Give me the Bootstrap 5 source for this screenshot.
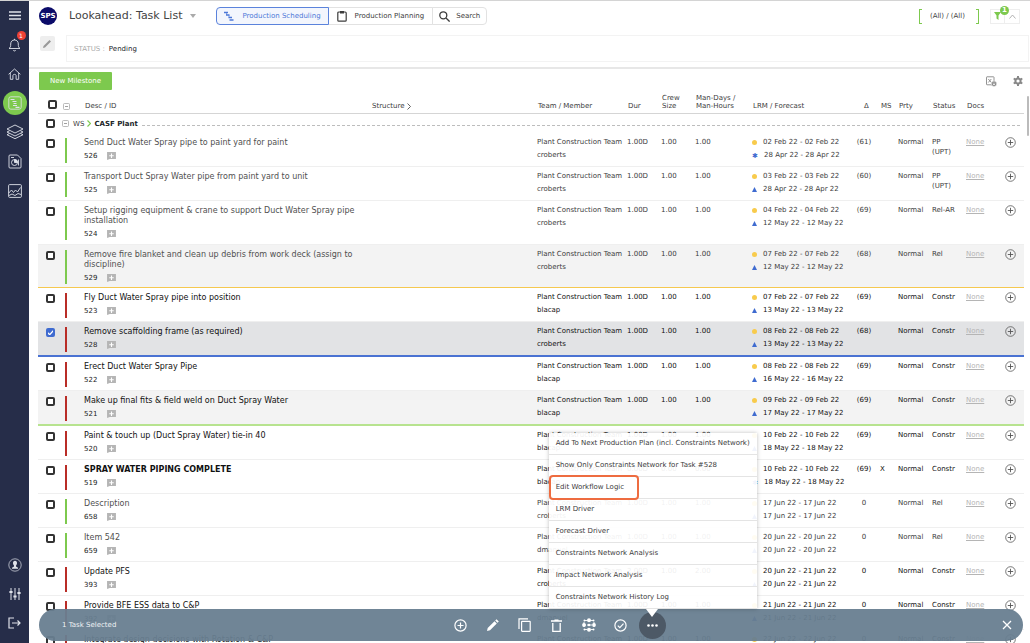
<!DOCTYPE html>
<html lang="en">
<head>
<meta charset="utf-8">
<meta name="viewport" content="width=device-width, initial-scale=1">
<title>Lookahead: Task List</title>
<link href="https://cdn.jsdelivr.net/npm/bootstrap@5.3.0/dist/css/bootstrap.min.css" rel="stylesheet">
<style>
:root{--navy:#262d49;--green:#7dc94e;--red:#b92d27;--blue:#3f6bd0;--ink:#3c3c3c;}
body{font-family:"DejaVu Sans",Verdana,sans-serif;font-size:7px;line-height:10px;color:var(--ink);background:#fff}
svg{display:block;fill:none;stroke:currentColor}
button{line-height:inherit}
.shell{height:100vh;overflow:hidden;border-top:1px solid #d4d4d4}
.side{width:29px;flex:none;background:var(--navy);color:#dfe2ea;padding-bottom:6px}
.side a{color:inherit;width:24px;height:29px}
.side .active-item{background:var(--green);border-radius:50%;height:24px;margin:3px 0}
.count{top:1px;right:1px;width:9px;height:9px;border-radius:50%;background:#ee4136;color:#fff;font-size:6px;line-height:9px}
.logo{width:18px;height:18px;border-radius:50%;background:#0b0b69;color:#fff;font-size:7px;font-weight:bold}
.topbar{height:30px;padding:0 10px 0 10px}
.page-title{font-size:11px;line-height:16px;color:#444}
.caret{border:3px solid transparent;border-top:4px solid #aaa;border-bottom:0}
.tab-btn{height:18px;border:1px solid #e2e2e2;background:#fff;color:#3c3c3c;padding:0 8px;gap:8px}
.tab-btn + .tab-btn{margin-left:-1px}
.tab-btn:last-child{padding:0 6px;gap:6px}
.tab-btn.on{border-color:#5b83dc;background:#f3f6fd;color:#4d78d8;padding:0 7px;position:relative}
.brackets{color:#444;height:16px;padding:0 7px}
.brackets::before,.brackets::after{content:"";width:3px;height:15px;border:1px solid var(--green)}
.brackets::before{border-right:0;margin-right:8px}
.brackets::after{border-left:0;margin-left:11px}
.mini{width:15px;height:15px;border:1px solid #eee;background:#fff;padding:0;color:#aaa}
.mini + .mini{border-left:0}
.count-green{top:-4px;left:9px;width:9px;height:9px;border-radius:50%;background:var(--green);color:#fff;font-size:7px;line-height:9px;font-weight:bold}
.edit-btn{width:15px;height:15px;background:#eee;border:0;border-radius:2px;color:#999;padding:0;margin-top:5px}
.status-box{height:27px;border:1px solid #f3f3f3;padding:0 7px;margin:4px 0 0 11px}
.status-label{color:#aaa}
.status-row{height:38px;padding:0 1px 0 11px;border-bottom:2px solid #e7e7e7}
.actions{height:24px;padding:0 7px 0 10px;color:#888}
.new-btn{background:var(--green);color:#fff;border:0;border-radius:1px;height:18px;width:73px;padding:0}
.grid-area{padding:0 6px 0 9px}
.tasks{table-layout:fixed;width:100%;border-collapse:separate;border-spacing:0}
.tasks th{font-weight:normal;vertical-align:bottom;height:21px;padding:0 0 3px 1px;line-height:8px;border-bottom:1px solid #d5d5d5;white-space:nowrap}
.tasks td{vertical-align:top;padding:0;height:34px;border-bottom:1px solid #efefef}
.tasks .grp td{height:19px;border:0;vertical-align:middle}
.tasks .cell{padding-top:4px;line-height:10px;white-space:nowrap}
.tasks .pair{line-height:13px;padding-top:3px}
.tasks .ttl{font-size:8px;padding:5px 0 0;max-width:278px;white-space:normal}
.ids{height:10px;margin-top:3px;gap:10px;color:#222}
.chk{appearance:none;display:block;width:9px;height:9px;border:2px solid #333;border-radius:2px;margin:6px 0 0 8px;background:#fff}
.tasks th .chk{margin:0 0 1px 9px}
.tasks .grp .chk{margin:0 0 0 8px}
.chk:checked{border-color:var(--blue);background:var(--blue) url("data:image/svg+xml,%3Csvg xmlns='http://www.w3.org/2000/svg' viewBox='0 0 8 8'%3E%3Cpath d='M1.2 4.2l2 2 3.6-4' fill='none' stroke='white' stroke-width='1.3'/%3E%3C/svg%3E") center/8px;background-origin:border-box}
.stripe{width:2px;background:var(--red);margin:5px 0 0 3px;height:25px}
.two .stripe{height:34px}
.tasks .two td{height:44px}
.tasks .yl td{height:43px;border-bottom-color:#f5c84f}
.rel .stripe{background:var(--green)}
.constr td{color:#111}
.rel td .ttl{color:#505050}
.grey td{background:#f3f3f3}
.tasks .sel td{background:#e2e3e5;border-bottom:2px solid #4a72d2;height:35px}
.tasks .gl td{border-bottom:2px solid #b7e38f;height:35px}
.dot{width:5px;height:5px;border-radius:50%;background:#f8cb4c}
.tri{width:5px;height:5px;background:var(--blue);clip-path:polygon(50% 0,100% 100%,0 100%)}
.star{color:var(--blue);font-style:normal;line-height:8px;width:6px}
.lrm{gap:6px;height:13px}
.none-link{color:#b5b5b5;text-decoration:underline}
.plus{border:0;background:none;padding:0;color:#555;margin:4px 0 0 1px}
.dash{border-top:1px dashed #bdbdbd;height:0}
.path-arrow{color:var(--green);margin:0 3px}
.thumb{width:2px;height:40px;background:#bbb;right:1px;top:95px;border-radius:1px}
.float-bar{left:39px;right:7px;bottom:2px;height:32px;border-radius:16px;background:rgba(104,126,144,.95);color:#eef1f4;padding:0 11px 0 23px}
.tools{margin-right:6px}
.tool{width:32px;height:32px;border:0;background:none;color:#fff;padding:0}
.tool.round{width:27px;height:27px;border-radius:50%;background:#4d5966;margin:0 2px}
.pop{bottom:30px;left:-88px;width:208px;background:rgba(255,255,255,.93);box-shadow:0 0 4px rgba(0,0,0,.25);z-index:3}
.pop button{display:block;width:100%;height:22px;border:0;border-bottom:1px solid #e4e4e4;background:none;text-align:left;padding:0 7px;color:#3c3c3c}
.pop li:last-child button{border:0}
.ring{left:0;top:42px;width:90px;height:25px;border:2px solid #ee6c40;border-radius:4px;pointer-events:none}
.tip{border:6px solid transparent;border-top:8px solid #fff;border-bottom:0;left:9px;top:-3px;z-index:4}
</style>
</head>
<body>
<svg width="0" height="0" class="position-absolute">
<symbol id="i-note" viewBox="0 0 10 9"><path d="M0 0h10v8H3L0 9z" fill="#b5b5b5" stroke="none"/><path d="M5 1.800v5M2.500 4.200h5" stroke="#fff" stroke-width="1.200"/></symbol>
<symbol id="i-plus" viewBox="0 0 11 11"><circle cx="5.500" cy="5.500" r="4.800" stroke-width=".8"/><path d="M5.500 2.800v5.400M2.800 5.500h5.400" stroke-width=".9"/></symbol>
<symbol id="i-box" viewBox="0 0 7 7"><rect x=".5" y=".5" width="6" height="6" rx="1" stroke="#aaa" stroke-width=".8"/><path d="M2 3.500h3" stroke="#888" stroke-width=".8"/></symbol>
</svg>
<div class="shell d-flex position-relative">
  <nav class="side d-flex flex-column align-items-center justify-content-between" aria-label="Main">
    <div class="d-flex flex-column align-items-center">
      <a href="#" class="d-flex align-items-center justify-content-center" aria-label="Menu"><svg width="12" height="9" viewBox="0 0 12 9" stroke-width="1.500"><path d="M0 1h12M0 4.500h12M0 8h12"/></svg></a>
      <a href="#" class="d-flex align-items-center justify-content-center position-relative" aria-label="Alerts"><svg width="13" height="14" viewBox="0 0 13 14" stroke-width=".9"><path d="M1 10.500c1.500-1 1.700-2 1.700-4.500 0-2.500 1.500-4 3.800-4s3.800 1.500 3.800 4c0 2.500.2 3.500 1.700 4.500zM5.300 12c.4 1.300 2 1.300 2.400 0M6.500 2V.8"/></svg><span class="count position-absolute text-center">1</span></a>
      <a href="#" class="d-flex align-items-center justify-content-center" aria-label="Home"><svg width="13" height="12" viewBox="0 0 13 12" stroke-width=".9"><path d="M.6 6.300L6.500 1l5.900 5.300M2.300 5v6.300h2.600V7.500c0-1.500 3.200-1.500 3.200 0v3.800h2.600V5"/></svg></a>
      <a href="#" class="active-item d-flex align-items-center justify-content-center" aria-label="Tasks"><svg width="14" height="14" viewBox="0 0 14 14"><rect x=".8" y=".8" width="12.400" height="12.400" rx="2" stroke-width=".8"/><path d="M2.500 3.500h4M4.500 5.500h4M5.500 7.500h3M5 9.500h4M7.500 11.300h4" stroke-width="1.200"/></svg></a>
      <a href="#" class="d-flex align-items-center justify-content-center" aria-label="Layers"><svg width="18" height="17" viewBox="0 0 18 17" stroke-width=".9"><path d="M9 1l8 4-8 4-8-4zM3.500 6.800L1 8l8 4 8-4-2.500-1.200M3.500 9.500L1 10.700l8 4 8-4-2.500-1.200"/></svg></a>
      <a href="#" class="d-flex align-items-center justify-content-center" aria-label="Reports"><svg width="14" height="15" viewBox="0 0 14 15" stroke-width=".9"><path d="M2 1h7.500L13 4.500V13a1 1 0 0 1-1 1H2a1 1 0 0 1-1-1V2a1 1 0 0 1 1-1z"/><circle cx="6.500" cy="8.500" r="3"/><path d="M6.500 8.500V5.500a3 3 0 0 1 3 3z" fill="currentColor"/><path d="M3 3.500h3M10.500 5.500v6"/></svg></a>
      <a href="#" class="d-flex align-items-center justify-content-center" aria-label="Charts"><svg width="14" height="14" viewBox="0 0 14 14" stroke-width=".9"><rect x=".6" y=".6" width="12.800" height="12.800" rx="1"/><path d="M.8 9l2.700-3 2 2.500L7.500 6l2 2 3-4.500M1 11.500l3-1.500 3 1.500 3-2 3 1"/></svg></a>
    </div>
    <div class="d-flex flex-column align-items-center">
      <a href="#" class="d-flex align-items-center justify-content-center" aria-label="Account"><svg width="14" height="14" viewBox="0 0 14 14"><circle cx="7" cy="7" r="6.200" stroke-width=".7"/><path d="M7 2.800c1.400 0 2 1 2 2.200 0 1-.5 2-1 2.400V8.500l2 1.300v1H4v-1l2-1.300V7.400C5.500 7 5 6 5 5c0-1.200.6-2.200 2-2.200z" fill="currentColor" stroke="none"/></svg></a>
      <a href="#" class="d-flex align-items-center justify-content-center" aria-label="Settings"><svg width="12" height="12" viewBox="0 0 12 12"><path d="M2 0v12M6 0v12M10 0v12" stroke-width="1"/><path d="M.4 4h3.200M4.400 8.500h3.200M8.400 5h3.200" stroke-width="2"/></svg></a>
      <a href="#" class="d-flex align-items-center justify-content-center" aria-label="Log out"><svg width="13" height="12" viewBox="0 0 13 12" stroke-width="1.200"><path d="M6 1H1v10h5M4 6h8M9.500 3.500L12 6 9.500 8.500"/></svg></a>
    </div>
  </nav>

  <main class="flex-grow-1 overflow-hidden">
    <header class="topbar d-flex align-items-center justify-content-between">
      <div class="d-flex align-items-center">
        <span class="logo d-flex align-items-center justify-content-center">SPS</span>
        <h1 class="page-title mb-0 ms-2 ps-1 fw-normal">Lookahead: Task List</h1>
        <span class="caret ms-2"></span>
        <div class="d-flex ms-3 ps-1">
          <button class="tab-btn on rounded-1 rounded-end-0 d-flex align-items-center"><svg width="10" height="10" viewBox="0 0 10 10" stroke-width="1.300"><path d="M0 1.500h4M2 4h3.500M4.500 6.500H8M5.500 9h4"/><path d="M2.500 1.500V4M5 4v2.500" stroke-width=".6"/></svg>Production Scheduling</button>
          <button class="tab-btn d-flex align-items-center"><svg width="10" height="12" viewBox="0 0 10 12" stroke-width="1.200"><rect x=".8" y="2" width="8.400" height="9.200" rx="1"/><path d="M3 1h4v2.500H3z" fill="currentColor" stroke="none"/></svg>Production Planning</button>
          <button class="tab-btn rounded-1 rounded-start-0 d-flex align-items-center"><svg width="11" height="11" viewBox="0 0 11 11" stroke-width="1.300"><circle cx="4.300" cy="4.300" r="3.500"/><path d="M7 7l3.600 3.600"/></svg>Search</button>
        </div>
      </div>
      <div class="d-flex align-items-center">
        <span class="brackets d-flex align-items-center">(All) / (All)</span>
        <div class="d-flex ms-1">
          <button class="mini position-relative d-flex align-items-center justify-content-center" aria-label="Filter"><svg width="7" height="8" viewBox="0 0 7 8"><path d="M0 0h7L4.500 3.500V8l-2-1.500v-3z" fill="#7dc94e" stroke="none"/></svg><span class="count-green position-absolute">1</span></button>
          <button class="mini d-flex align-items-center justify-content-center" aria-label="Collapse"><svg width="7" height="5" viewBox="0 0 7 5"><path d="M.5 4.500l3-3.500 3 3.500" stroke-width=".9"/></svg></button>
        </div>
      </div>
    </header>
    <section class="status-row d-flex align-items-start">
      <button class="edit-btn d-flex align-items-center justify-content-center" aria-label="Edit"><svg width="9" height="9" viewBox="0 0 9 9"><path d="M0 9l.5-2L6.500 1 8 2.500 2 8.500z" fill="currentColor" stroke="none"/></svg></button>
      <div class="status-box d-flex align-items-center flex-grow-1"><span class="status-label">STATUS :</span><span class="ms-1 text-dark">Pending</span></div>
    </section>
    <section class="actions d-flex align-items-center justify-content-between">
      <button class="new-btn">New Milestone</button>
      <div class="d-flex align-items-center gap-3">
        <svg width="11" height="11" viewBox="0 0 11 11" stroke-width=".9"><rect x=".5" y=".8" width="7.500" height="8" rx=".5"/><path d="M2.300 3l3 3.500M5.300 3l-3 3.500"/><circle cx="8" cy="7.800" r="2.700" fill="#888" stroke="#fff" stroke-width=".5"/><path d="M8 6.500V9M6.800 7.900L8 9l1.200-1.100" stroke="#fff" stroke-width=".7"/></svg>
        <svg width="10" height="10" viewBox="0 0 10 10"><circle cx="5" cy="5" r="2.600" stroke-width="2"/><path d="M5 0v2M5 8v2M.7 2.500l1.700 1M7.600 6.500l1.700 1M.7 7.500l1.700-1M7.600 3.500l1.700-1" stroke-width="2"/></svg>
      </div>
    </section>
    <div class="grid-area">
      <table class="tasks">
        <colgroup><col style="width:24px"><col style="width:22px"><col><col style="width:166px"><col style="width:90px"><col style="width:34px"><col style="width:34px"><col style="width:57px"><col style="width:104px"><col style="width:24px"><col style="width:18px"><col style="width:34px"><col style="width:34px"><col style="width:38px"><col style="width:20px"></colgroup>
        <thead><tr>
          <th><input type="checkbox" class="chk" aria-label="Select all"></th>
          <th><svg width="7" height="7" class="mb-0"><use href="#i-box"/></svg></th>
          <th>Desc / ID</th><th>Structure <svg class="d-inline" width="4" height="7" viewBox="0 0 4 7" stroke-width=".8"><path d="M.5 .5l3 3-3 3"/></svg></th><th>Team / Member</th><th>Dur</th><th>Crew<br>Size</th><th>Man-Days /<br>Man-Hours</th><th>LRM / Forecast</th><th class="ps-1"><span class="ps-1">Δ</span></th><th>MS</th><th>Prty</th><th>Status</th><th>Docs</th><th></th>
        </tr></thead>
        <tbody id="rows">
          <tr class="grp">
            <td><input type="checkbox" class="chk" aria-label="Select CASF Plant"></td>
            <td colspan="14"><div class="d-flex align-items-center pe-1"><svg width="7" height="7"><use href="#i-box"/></svg><span class="ms-1">WS</span><svg class="path-arrow" width="4" height="7" viewBox="0 0 4 7" stroke-width="1.200"><path d="M.5 .5l3 3-3 3"/></svg><b class="text-dark">CASF Plant</b><span class="dash flex-grow-1 ms-1 mt-1"></span></div></td>
          </tr>
        </tbody>
      </table>
    </div>
    <div class="thumb position-absolute"></div>
  </main>

  <div class="float-bar position-absolute d-flex align-items-center justify-content-between">
    <span>1 Task Selected</span>
    <div class="tools d-flex align-items-center">
      <button class="tool d-flex align-items-center justify-content-center" aria-label="Add"><svg width="13" height="13" viewBox="0 0 13 13" stroke-width="1.200"><circle cx="6.500" cy="6.500" r="5.600"/><path d="M6.500 3.500v6M3.500 6.500h6"/></svg></button>
      <button class="tool d-flex align-items-center justify-content-center" aria-label="Edit"><svg width="12" height="12" viewBox="0 0 12 12"><path d="M0 12l.7-3L7.500 2.200l2.300 2.300L3 11.300zM8.200 1.500L9.500.2l2.300 2.300-1.300 1.300z" fill="currentColor" stroke="none"/></svg></button>
      <button class="tool d-flex align-items-center justify-content-center" aria-label="Copy"><svg width="13" height="14" viewBox="0 0 13 14" stroke-width="1.200"><rect x="3.600" y="3.300" width="8.600" height="10" rx=".5"/><path d="M1 11V.8h9"/></svg></button>
      <button class="tool d-flex align-items-center justify-content-center" aria-label="Delete"><svg width="11" height="13" viewBox="0 0 11 13" stroke-width="1.300"><path d="M0 2h11M3.500 1.200h4M1.800 4v8.300h7.400V4"/></svg></button>
      <button class="tool d-flex align-items-center justify-content-center" aria-label="Network"><svg width="14" height="14" viewBox="0 0 14 14"><path d="M3 2.500h8M3 11.500h8M2 7h10M2 4v6M12 4v6" stroke-width=".9" stroke-dasharray="2 1"/><g fill="currentColor" stroke="none"><circle cx="7" cy="2.300" r="2"/><circle cx="7" cy="11.700" r="2"/><circle cx="2" cy="7" r="1.900"/><circle cx="12" cy="7" r="1.900"/><circle cx="7" cy="7" r="1.300"/><circle cx="2.500" cy="2.500" r="1"/><circle cx="11.500" cy="2.500" r="1"/><circle cx="2.500" cy="11.500" r="1"/><circle cx="11.500" cy="11.500" r="1"/></g></svg></button>
      <button class="tool d-flex align-items-center justify-content-center" aria-label="Complete"><svg width="13" height="13" viewBox="0 0 13 13" stroke-width="1.200"><circle cx="6.500" cy="6.500" r="5.600"/><path d="M3.800 6.700l2 2 3.700-4"/></svg></button>
      <div class="position-relative">
        <button class="tool round d-flex align-items-center justify-content-center" aria-label="More"><svg width="11" height="3" viewBox="0 0 11 3"><g fill="#fff" stroke="none"><circle cx="1.500" cy="1.500" r="1.300"/><circle cx="5.500" cy="1.500" r="1.300"/><circle cx="9.500" cy="1.500" r="1.300"/></g></svg></button>
        <ul class="pop position-absolute list-unstyled mb-0">
          <li><button>Add To Next Production Plan (incl. Constraints Network)</button></li>
          <li><button>Show Only Constraints Network for Task #528</button></li>
          <li><button>Edit Workflow Logic</button></li>
          <li><button>LRM Driver</button></li>
          <li><button>Forecast Driver</button></li>
          <li><button>Constraints Network Analysis</button></li>
          <li><button>Impact Network Analysis</button></li>
          <li><button>Constraints Network History Log</button></li>
          <li class="ring position-absolute" aria-hidden="true"></li>
        </ul>
        <span class="tip position-absolute"></span>
      </div>
    </div>
    <button class="tool w-auto" aria-label="Close"><svg width="10" height="10" viewBox="0 0 10 10" stroke-width="1.300"><path d="M1 1l8 8M9 1L1 9"/></svg></button>
  </div>
</div>
<script src="https://cdn.jsdelivr.net/npm/bootstrap@5.3.0/dist/js/bootstrap.bundle.min.js"></script>
<script>
// id, title, member, duration, crew, man-days, lrm, forecast, delta, milestone, status, row classes
const tasks = [
  [526,'Send Duct Water Spray pipe to paint yard for paint','croberts','1.00D','1.00','1.00','02 Feb 22','28 Apr 22','(61)','','PP<br>(UPT)','rel star-row'],
  [525,'Transport Duct Spray Water pipe from paint yard to unit','croberts','1.00D','1.00','1.00','03 Feb 22','28 Apr 22','(60)','','PP<br>(UPT)','rel'],
  [524,'Setup rigging equipment &amp; crane to support Duct Water Spray pipe installation','croberts','1.00D','1.00','1.00','04 Feb 22','12 May 22','(69)','','Rel-AR','rel two'],
  [529,'Remove fire blanket and clean up debris from work deck (assign to discipline)','croberts','1.00D','1.00','1.00','07 Feb 22','12 May 22','(68)','','Rel','rel two grey yl'],
  [523,'Fly Duct Water Spray pipe into position','blacap','1.00D','1.00','1.00','07 Feb 22','13 May 22','(69)','','Constr','constr'],
  [528,'Remove scaffolding frame (as required)','croberts','1.00D','1.00','1.00','08 Feb 22','13 May 22','(68)','','Constr','constr sel'],
  [522,'Erect Duct Water Spray Pipe','blacap','1.00D','1.00','1.00','08 Feb 22','16 May 22','(69)','','Constr','constr'],
  [521,'Make up final fits &amp; field weld on Duct Spray Water','blacap','1.00D','1.00','1.00','09 Feb 22','17 May 22','(69)','','Constr','constr grey gl'],
  [520,'Paint &amp; touch up (Duct Spray Water) tie-in 40','blacap','1.00D','1.00','1.00','10 Feb 22','18 May 22','(69)','','Constr','constr'],
  [519,'<b>SPRAY WATER PIPING COMPLETE</b>','blacap','0.00D','0.00','0.00','10 Feb 22','18 May 22','(69)','X','Constr','constr star-row'],
  [658,'Description','croberts','1.00D','1.00','1.00','17 Jun 22','17 Jun 22','0','','Rel','rel'],
  [659,'Item 542','dmanuel','1.00D','1.00','1.00','20 Jun 22','20 Jun 22','0','','Rel','rel'],
  [393,'Update PFS','croberts','2.00D','1.00','2.00','20 Jun 22 - 21 Jun 22','20 Jun 22 - 21 Jun 22','0','','Constr','constr'],
  [392,'Provide BFE ESS data to C&amp;P','dmanuel','1.00D','1.00','1.00','21 Jun 22','21 Jun 22','0','','Constr','constr'],
  [391,'Integrate design decisions with Rotation &amp; C&amp;P','dmanuel','1.00D','1.00','1.00','22 Jun 22','22 Jun 22','0','','Constr','constr']
];
const range = d => d.includes(' - ') ? d : d + ' - ' + d;
document.getElementById('rows').insertAdjacentHTML('beforeend', tasks.map(t => `
<tr class="${t[11]}">
  <td><input type="checkbox" class="chk" aria-label="Select task ${t[0]}"${t[11].includes('sel') ? ' checked' : ''}></td>
  <td><div class="stripe"></div></td>
  <td colspan="2"><div class="ttl">${t[1]}</div><div class="ids d-flex align-items-center">${t[0]}<svg width="9" height="8" viewBox="0 0 10 9"><use href="#i-note"/></svg></div></td>
  <td><div class="cell pair">Plant Construction Team<br>${t[2]}</div></td>
  <td><div class="cell">${t[3]}</div></td><td><div class="cell">${t[4]}</div></td><td><div class="cell">${t[5]}</div></td>
  <td><div class="cell pair"><div class="lrm d-flex align-items-center"><i class="dot"></i>${range(t[6])}</div><div class="lrm d-flex align-items-center">${t[11].includes('star-row') ? '<i class="star">✱</i>' : '<i class="tri"></i>'}${range(t[7])}</div></div></td>
  <td><div class="cell text-center pe-2">${t[8]}</div></td><td><div class="cell">${t[9]}</div></td><td><div class="cell">Normal</div></td>
  <td><div class="cell">${t[10]}</div></td><td><div class="cell"><a class="none-link" href="#">None</a></div></td>
  <td><button class="plus" aria-label="Add to ${t[0]}"><svg width="11" height="11"><use href="#i-plus"/></svg></button></td>
</tr>`).join(''));
</script>
</body>
</html>
